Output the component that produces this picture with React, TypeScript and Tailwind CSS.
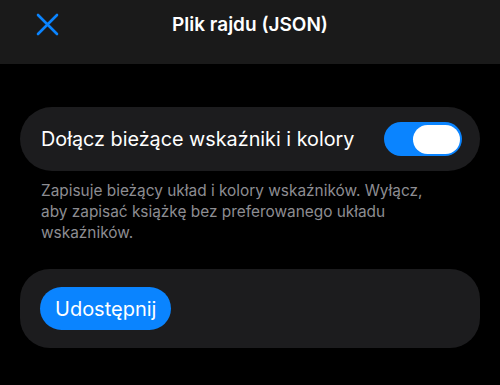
export default function App() {
  return (
    <div className="w-[500px] h-[385px] bg-black overflow-hidden" style={{ fontFamily: "Inter, 'Noto Sans', sans-serif" }}>
      <div className="h-[64px] bg-[#1a1a1a] relative flex items-start justify-center pt-[11px]">
        <svg className="absolute left-[36px] top-[13px]" width="23" height="23" viewBox="0 0 23 23" fill="none">
          <path d="M2 2L21 21M21 2L2 21" stroke="#0a84ff" strokeWidth="2.6" strokeLinecap="round" />
        </svg>
        <div className="text-white text-[19px] leading-[28px] font-semibold">Plik rajdu (JSON)</div>
      </div>
      <div className="px-[20px] pt-[43px]">
        <div className="h-[64px] rounded-full bg-[#1c1c1e] flex items-center justify-between pl-[21px] pr-[18px]">
          <span className="text-white text-[19.8px] leading-[26px]">Dołącz bieżące wskaźniki i kolory</span>
          <div className="w-[78px] h-[34px] rounded-full bg-[#0a84ff] flex items-center justify-end pr-[2px]">
            <div className="w-[47px] h-[29px] rounded-full bg-white" />
          </div>
        </div>
        <p className="ml-[21px] w-[400px] pt-[9px] text-[15.4px] leading-[21px] text-[#8d8d92]">
          Zapisuje bieżący układ i kolory wskaźników. Wyłącz, aby zapisać książkę bez preferowanego układu wskaźników.
        </p>
        <div className="mt-[26px] h-[79px] rounded-[30px] bg-[#1c1c1e] flex items-center px-[20px]">
          <button className="h-[43px] px-[15px] rounded-full bg-[#0a84ff] text-white text-[20px]">Udostępnij</button>
        </div>
      </div>
    </div>
  );
}
